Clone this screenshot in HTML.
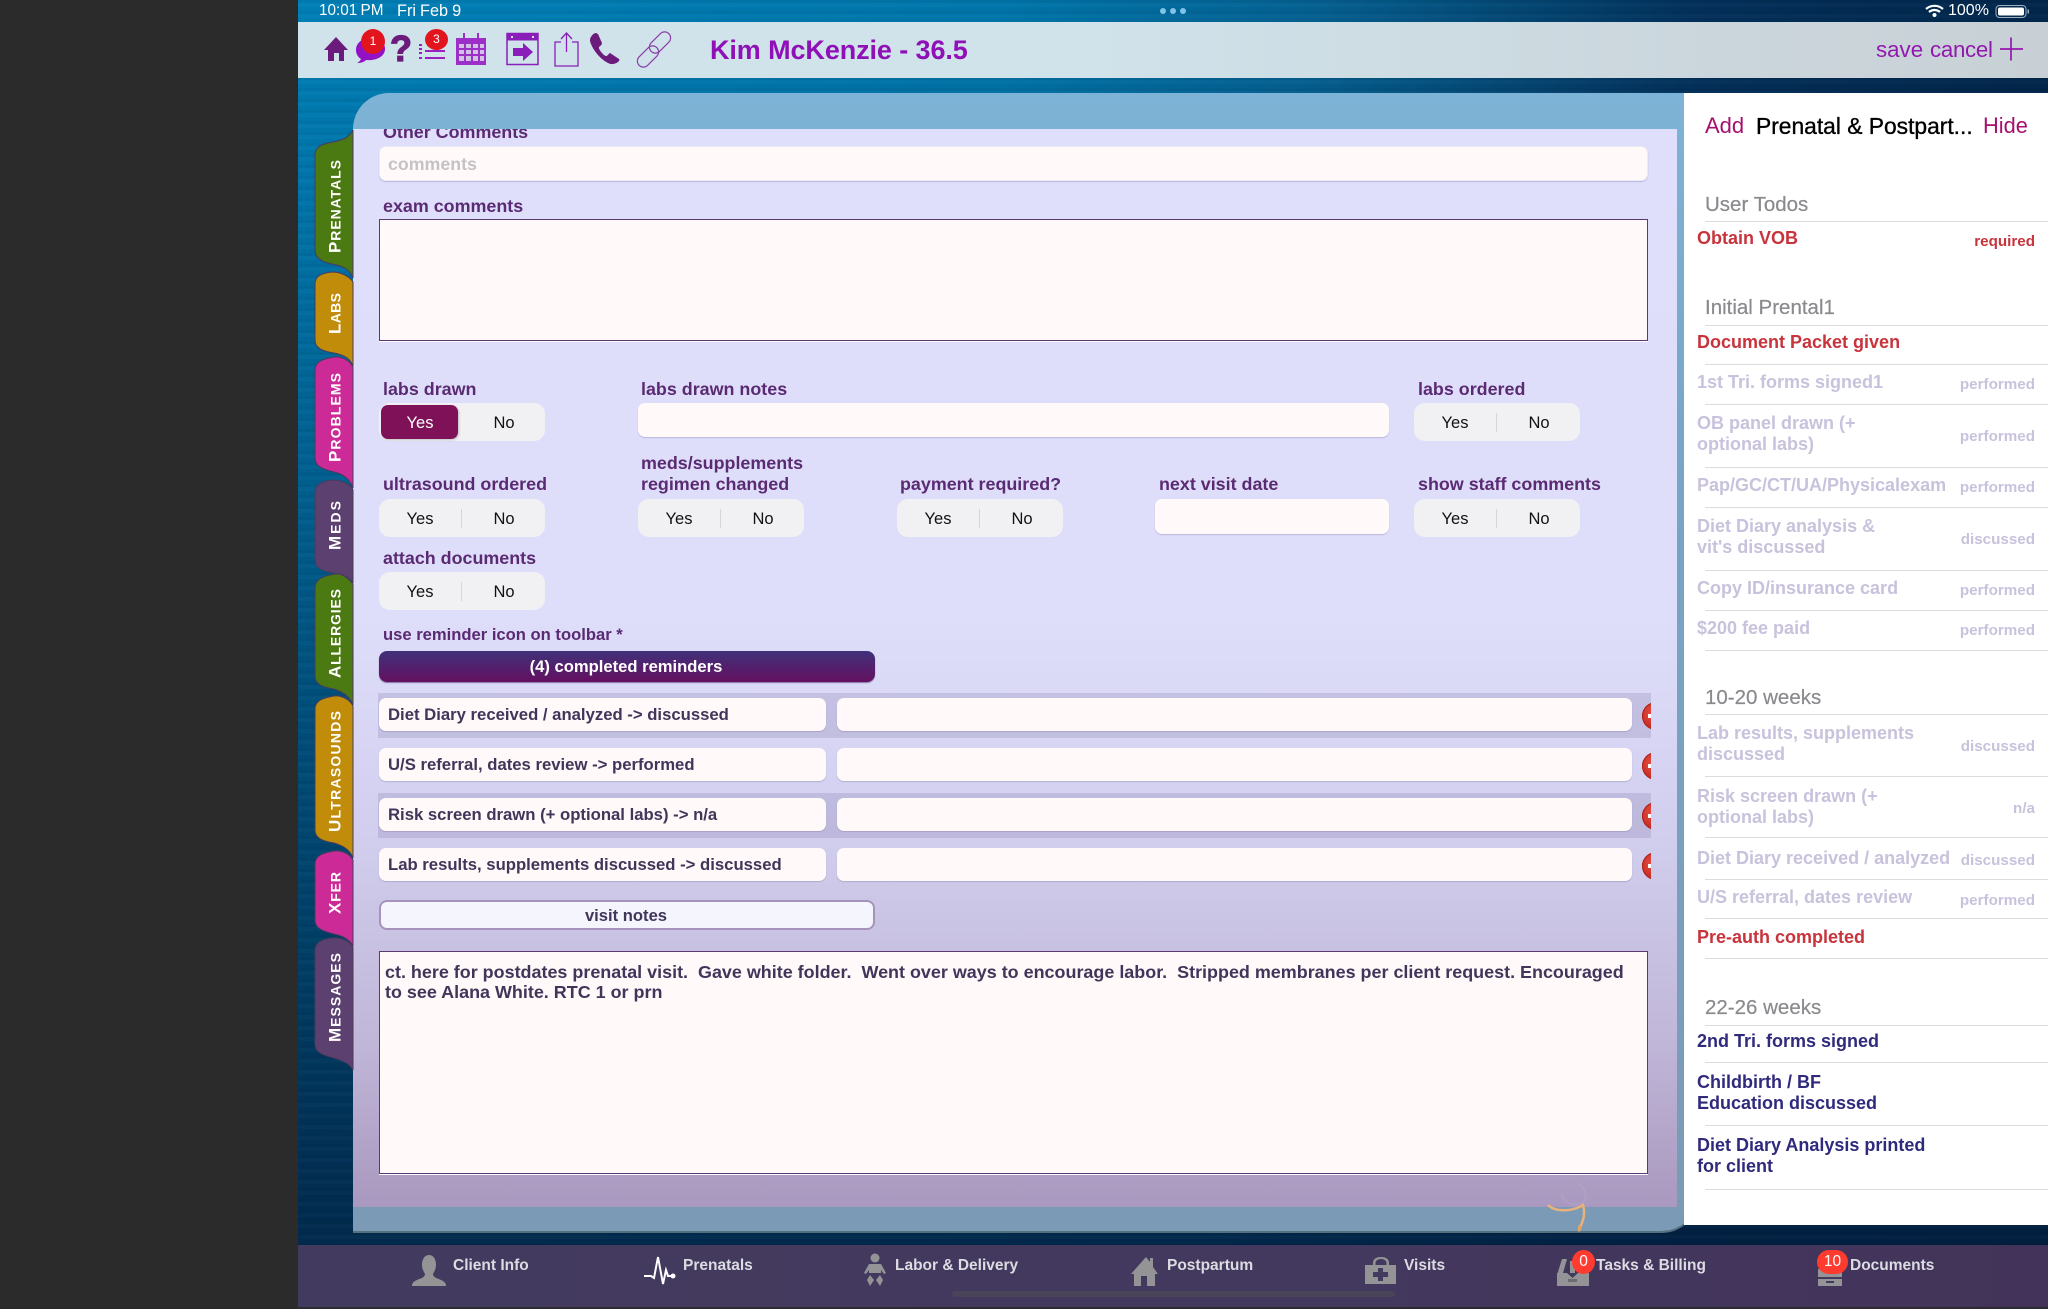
<!DOCTYPE html>
<html><head><meta charset="utf-8">
<style>
html,body{margin:0;padding:0;background:#2b2b2b}
#p{position:relative;width:2048px;height:1309px;overflow:hidden;background:#2b2b2b;font-family:"Liberation Sans",sans-serif}
#p div{position:absolute;white-space:pre;box-sizing:border-box}
#app{left:298px;top:0;width:1750px;height:1309px;background:linear-gradient(180deg,rgba(1,30,62,0) 0%,rgba(1,30,62,.12) 15%,rgba(1,30,62,.5) 55%,rgba(1,30,62,.85) 92%,rgba(1,30,62,.9) 100%),linear-gradient(90deg,#0080b8 0%,#0076ab 40%,#046192 58%,#03305a 80%,#02264b 100%);overflow:hidden}
#streak{left:0;top:0;width:1750px;height:1309px;background:repeating-linear-gradient(180deg,rgba(0,0,0,.05) 0 3px,rgba(255,255,255,.015) 3px 7px,rgba(0,0,0,.02) 7px 11px)}
.l{font-weight:bold;font-size:17.9px;line-height:20px;height:20px;color:#5a2a72}
.seg{background:#f1f1f3;border-radius:11px;height:38px;width:166px}
.seg i{position:absolute;left:82px;top:10px;width:1px;height:19px;background:#d6d6da}
.seg span{position:absolute;top:1px;line-height:38px;font-size:16.5px;color:#111;width:60px;text-align:center}
.seg .y{left:11px}.seg .n{left:95px}
.inp{background:#fff9f9;border-radius:7px;box-shadow:0 1px 1px rgba(120,110,160,.35)}
.ta{background:#fff9f9;border:1px solid #5a3a70;box-shadow:0 1px 0 #fff}
.band{left:378px;width:1273px;height:45px;background:rgba(120,110,160,.22)}
.it{font-weight:bold;font-size:16.7px;line-height:33px;height:33px;color:#41355a;padding-left:9px;left:379px;width:447px}
.minus{width:28px;height:28px;border-radius:50%;background:radial-gradient(circle at 40% 40%,#e85045,#c0241c 75%);box-shadow:inset 0 0 0 1px #a82018}
.minus b{position:absolute;left:6px;top:12px;width:16px;height:4px;background:#fff}
.sl{height:1px;left:1705px;width:343px;background:#dcdcdf}
.sh{left:1705px;font-size:20.5px;line-height:24px;height:24px;color:#8a8a8e;-webkit-text-stroke:.2px #8a8a8e}
.s{left:1697px;font-weight:bold;font-size:18px;line-height:20.5px;color:#c8c2dc}
.r{color:#c8333c}.nv{color:#302a7c}
.st{right:13px;font-weight:bold;font-size:15.2px;line-height:20px;height:20px;color:#c8c2dc;text-align:right}
.st.r{color:#c8333c}
.b{top:1256px;font-weight:bold;font-size:15.5px;line-height:20px;color:#dcdce2}
</style></head><body>
<div id="p">
<div id="app"><div id="streak"></div></div>

<!-- toolbar -->
<div style="left:298px;top:22px;width:1750px;height:56px;background:linear-gradient(90deg,#d0e3eb 0%,#d0e2ea 45%,#c8d0d5 100%)"></div>
<div style="left:319px;top:1px;color:#fff;font-size:15.3px;line-height:20px;word-spacing:-1px">10:01 PM</div>
<div style="left:397px;top:1px;color:#fff;font-size:16.3px;line-height:20px;word-spacing:-.5px">Fri Feb 9</div>
<div style="left:1160px;top:8px;width:6px;height:6px;border-radius:50%;background:#7fc4e8;box-shadow:10px 0 0 #7fc4e8,20px 0 0 #7fc4e8"></div>
<div style="left:1948px;top:1px;color:#fff;font-size:16px;line-height:20px">100%</div>

<svg style="position:absolute;left:0;top:0" width="2048" height="93" viewBox="0 0 2048 93">
 <g fill="none" stroke="#fff" stroke-width="2.2"><path d="M1926 9a13 13 0 0 1 17 0"/><path d="M1929 12a8.5 8.5 0 0 1 11 0"/></g><circle cx="1934.5" cy="15" r="2" fill="#fff"/>
 <rect x="1996" y="5.5" width="30" height="12" rx="3.5" fill="none" stroke="#9fb0c0" stroke-width="1"/><rect x="1998" y="7.5" width="26" height="8" rx="2" fill="#fff"/><rect x="2027.5" y="9.5" width="1.5" height="4" fill="#9fb0c0"/>
 <path d="M336 37 L324 50 H328 V61 H334 V53 H339 V61 H344 V50 H348 Z" fill="#6b1b7b"/>
 <path d="M371 38c-9 0-15 5-15 12 0 4 2 7 5 9-1 2-2 3-4 4 4 0 7-1 9-3 9 1 19-3 19-11 0-7-6-11-14-11z" fill="#9212c4"/>
 <text x="390" y="61" font-family="Liberation Sans" font-weight="bold" font-size="36" fill="#6b1b7b" stroke="#6b1b7b" stroke-width="1.2">?</text>
 <g fill="#9a20c4"><rect x="419" y="44" width="3" height="2"/><rect x="419" y="48" width="3" height="2"/><rect x="419" y="52" width="3" height="2"/><rect x="419" y="57" width="3" height="2"/><rect x="425" y="50" width="20" height="2"/><rect x="425" y="57" width="20" height="2"/></g>
 <rect x="456" y="38" width="30" height="27" fill="#9b2fc8"/>
 <rect x="463" y="33" width="2" height="7" fill="#9b2fc8"/><rect x="477" y="33" width="2" height="7" fill="#9b2fc8"/>
 <g fill="#d0c2e2"><rect x="459" y="44" width="5" height="4"/><rect x="466" y="44" width="5" height="4"/><rect x="473" y="44" width="5" height="4"/><rect x="480" y="44" width="4" height="4"/><rect x="459" y="50" width="5" height="4"/><rect x="466" y="50" width="5" height="4"/><rect x="473" y="50" width="5" height="4"/><rect x="480" y="50" width="4" height="4"/><rect x="459" y="56" width="5" height="5"/><rect x="466" y="56" width="5" height="5"/><rect x="473" y="56" width="5" height="5"/><rect x="480" y="56" width="4" height="5"/></g>
 <rect x="507" y="33.5" width="31" height="31" fill="none" stroke="#8a1eb8" stroke-width="1.5"/><rect x="507" y="33.5" width="31" height="7" fill="#8a1eb8"/><rect x="511" y="36" width="2" height="2" fill="#d0e2ea"/><rect x="532" y="36" width="2" height="2" fill="#d0e2ea"/>
 <path d="M513 48h10v-5l10 9-10 9v-5h-10z" fill="#8a1eb8"/>
 <path d="M561 42h-6v24h23V42h-6M566.5 52V33.5M561 39l5.5-6 5.5 6" fill="none" stroke="#8a1eb8" stroke-width="1.3"/>
 <path d="M591 37c1-2 3-4 5-4l2 1 4 9c0 2-2 3-3 4-1 2 5 9 7 9 2 0 3-3 4-3l9 6c1 1 0 2-1 3-3 2-6 3-10 1-8-4-16-14-18-22 0-1 0-3 1-4z" fill="#6b1b7b"/>
 <g fill="none" stroke="#8a3ea8" stroke-width="1.2"><rect x="654" y="30" width="12" height="25" rx="6" transform="rotate(45 660 42.500)"/><rect x="642" y="44" width="12" height="25" rx="6" transform="rotate(45 648 56.500)"/></g>
 <path d="M2011 37.5v23M2000 49h23" stroke="#9318b0" stroke-width="1.7" fill="none"/>
</svg>
<div style="left:361px;top:29px;width:24px;height:25px;border-radius:50%;background:#e2141e;color:#fff;font-size:12px;line-height:25px;text-align:center">1</div>
<div style="left:425px;top:29px;width:23px;height:21px;border-radius:50%;background:#e2141e;color:#fff;font-size:12px;line-height:21px;text-align:center">3</div>
<div style="left:710px;top:33px;font-weight:bold;font-size:27px;line-height:34px;color:#9010b8;letter-spacing:-.1px">Kim McKenzie - 36.5</div>
<div style="left:1876px;top:36px;font-size:22.3px;line-height:28px;color:#9318b0">save</div>
<div style="left:1930px;top:36px;font-size:22.3px;line-height:28px;color:#9318b0;letter-spacing:-.3px">cancel</div>

<!-- frame and form -->
<div style="left:353px;top:93px;width:1345px;height:1138px;background:linear-gradient(180deg,#7db3d6 0%,#78a6c6 30%,#7a9ab5 100%);border-radius:36px 0 36px 0;box-shadow:0 2px 0 #55707f"></div>
<div style="left:353px;top:129px;width:1324px;height:1078px;background:linear-gradient(180deg,#dfdffb 0%,#dedefa 45%,#d2cfee 65%,#c0b6d8 85%,#a998bf 100%);overflow:hidden">
 <div class="l" style="left:30px;top:-7px">Other Comments</div>
</div>
<svg style="position:absolute;left:1530px;top:1174px" width="90" height="70" viewBox="0 0 90 70" fill="none"><path d="M18 31 C26 39 44 37 53 31 C56 42 52 48 50 54" stroke="#e8b27a" stroke-width="2.5"/><path d="M50 50c2 3 2 6-1 8-2-2-2-5 1-8z" fill="#e0a468"/><path d="M32 20c0 9 12 12 20 9 6-4 4-16-4-20" stroke="#b8a7c8" stroke-width="1.5" opacity=".6"/></svg>

<!-- tabs -->
<svg style="position:absolute;left:0;top:0;overflow:visible" width="360" height="1100" viewBox="0 0 360 1100">
 <g stroke="#4a3a5e" stroke-width="1">
 <path d="M353 130 C348 140 338 141 328 143 C320 145 315 148 315 155 V250 C315 258 322 262 332 264 C344 266 350 270 353 278 Z" fill="#4b7a12"/>
 <path d="M353 282 C350 277 342 272 332 272 C322 273 315 276 315 284 V340 C315 348 322 351 334 353 C344 355 350 358 353 366 Z" fill="#c08c0a"/>
 <path d="M353 367 C350 361 342 356 334 357 C322 359 315 362 315 370 V458 C315 466 322 469 334 472 C344 474 350 480 353 488 Z" fill="#cc2a96"/>
 <path d="M353 490 C350 484 342 480 332 480 C322 481 315 485 315 492 V560 C315 568 322 571 334 573 C344 575 350 577 353 583 Z" fill="#5c4070"/>
 <path d="M353 584 C348 578 342 573 335 574 C322 576 315 580 315 588 V676 C315 684 322 687 334 689 C344 692 350 697 353 705 Z" fill="#4b7a12"/>
 <path d="M353 706 C350 700 342 695 334 696 C322 698 315 701 315 709 V830 C315 838 322 841 334 843 C344 846 350 850 353 858 Z" fill="#c08c0a"/>
 <path d="M353 860 C350 854 342 850 334 851 C322 853 315 856 315 864 V920 C315 928 322 931 334 934 C344 936 350 940 353 946 Z" fill="#cc2a96"/>
 <path d="M353 947 C350 942 342 937 332 938 C322 939 315 943 315 950 V1044 C315 1052 322 1055 334 1058 C344 1061 350 1064 353 1070 Z" fill="#5c4070"/>
 </g>
 <g fill="#fff" font-family="Liberation Sans" font-weight="bold" font-size="14">
 <text transform="translate(340.5 253) rotate(-90)" textLength="93" lengthAdjust="spacing"><tspan font-size="17">P</tspan>RENATALS</text>
 <text transform="translate(340.5 334) rotate(-90)" textLength="41" lengthAdjust="spacing"><tspan font-size="17">L</tspan>ABS</text>
 <text transform="translate(340.5 462) rotate(-90)" textLength="89" lengthAdjust="spacing"><tspan font-size="17">P</tspan>ROBLEMS</text>
 <text transform="translate(340.5 550) rotate(-90)" textLength="49" lengthAdjust="spacing"><tspan font-size="17">M</tspan>EDS</text>
 <text transform="translate(340.5 678) rotate(-90)" textLength="89" lengthAdjust="spacing"><tspan font-size="17">A</tspan>LLERGIES</text>
 <text transform="translate(340.5 832) rotate(-90)" textLength="121" lengthAdjust="spacing"><tspan font-size="17">U</tspan>LTRASOUNDS</text>
 <text transform="translate(340.5 914) rotate(-90)" textLength="42" lengthAdjust="spacing"><tspan font-size="17">X</tspan>FER</text>
 <text transform="translate(340.5 1042) rotate(-90)" textLength="89" lengthAdjust="spacing"><tspan font-size="17">M</tspan>ESSAGES</text>
 </g>
</svg>

<!-- form contents -->
<div class="inp" style="left:379px;top:146px;width:1269px;height:35px;border:1px solid #ecebf3"></div>
<div style="left:388px;top:154px;font-weight:bold;font-size:17.8px;line-height:20px;color:#c4c2c6">comments</div>
<div class="l" style="left:383px;top:196px">exam comments</div>
<div class="ta" style="left:379px;top:219px;width:1269px;height:122px"></div>

<div class="l" style="left:383px;top:379px">labs drawn</div>
<div class="seg" style="left:379px;top:403px"><div style="left:2px;top:2px;width:77px;height:34px;border-radius:7px;background:#7f1158;box-shadow:1px 1px 2px rgba(0,0,0,.2)"></div><span class="y" style="color:#fff">Yes</span><span class="n">No</span></div>
<div class="l" style="left:641px;top:379px">labs drawn notes</div>
<div class="inp" style="left:638px;top:403px;width:751px;height:34px"></div>
<div class="l" style="left:1418px;top:379px">labs ordered</div>
<div class="seg" style="left:1414px;top:403px"><i></i><span class="y">Yes</span><span class="n">No</span></div>

<div class="l" style="left:383px;top:474px">ultrasound ordered</div>
<div class="seg" style="left:379px;top:499px"><i></i><span class="y">Yes</span><span class="n">No</span></div>
<div class="l" style="left:641px;top:453px">meds/supplements</div>
<div class="l" style="left:641px;top:474px">regimen changed</div>
<div class="seg" style="left:638px;top:499px"><i></i><span class="y">Yes</span><span class="n">No</span></div>
<div class="l" style="left:900px;top:474px">payment required?</div>
<div class="seg" style="left:897px;top:499px"><i></i><span class="y">Yes</span><span class="n">No</span></div>
<div class="l" style="left:1159px;top:474px">next visit date</div>
<div class="inp" style="left:1155px;top:499px;width:234px;height:35px"></div>
<div class="l" style="left:1418px;top:474px">show staff comments</div>
<div class="seg" style="left:1414px;top:499px"><i></i><span class="y">Yes</span><span class="n">No</span></div>

<div class="l" style="left:383px;top:548px">attach documents</div>
<div class="seg" style="left:379px;top:572px"><i></i><span class="y">Yes</span><span class="n">No</span></div>

<div class="l" style="left:383px;top:625px;font-size:16.6px">use reminder icon on toolbar *</div>
<div style="left:379px;top:651px;width:496px;height:31px;border-radius:8px;background:linear-gradient(180deg,#40317a,#641060);color:#fff;font-weight:bold;font-size:16.6px;line-height:32px;text-align:center;padding-right:2px;box-shadow:0 1px 1px rgba(70,50,110,.6)">(4) completed reminders</div>

<div class="band" style="top:693px"></div>
<div class="band" style="top:793px"></div>
<div class="inp it" style="top:698px">Diet Diary received / analyzed -&gt; discussed</div>
<div class="inp it" style="top:748px">U/S referral, dates review -&gt; performed</div>
<div class="inp it" style="top:798px">Risk screen drawn (+ optional labs) -&gt; n/a</div>
<div class="inp it" style="top:848px">Lab results, supplements discussed -&gt; discussed</div>
<div class="inp" style="left:837px;top:698px;width:795px;height:33px"></div>
<div class="inp" style="left:837px;top:748px;width:795px;height:33px"></div>
<div class="inp" style="left:837px;top:798px;width:795px;height:33px"></div>
<div class="inp" style="left:837px;top:848px;width:795px;height:33px"></div>
<div style="left:1642px;top:690px;width:9px;height:200px;overflow:hidden">
 <div class="minus" style="left:0;top:12px"><b></b></div>
 <div class="minus" style="left:0;top:62px"><b></b></div>
 <div class="minus" style="left:0;top:112px"><b></b></div>
 <div class="minus" style="left:0;top:162px"><b></b></div>
</div>
<div style="left:379px;top:900px;width:496px;height:30px;border-radius:8px;background:#f5f5fd;border:2px solid #a693bb;color:#41355a;font-weight:bold;font-size:16.6px;line-height:28px;text-align:center;padding-right:2px">visit notes</div>
<div class="ta" style="left:379px;top:951px;width:1269px;height:223px"></div>
<div style="left:385px;top:962px;font-weight:bold;font-size:17.95px;line-height:20px;color:#41355a">ct. here for postdates prenatal visit.  Gave white folder.  Went over ways to encourage labor.  Stripped membranes per client request. Encouraged
to see Alana White. RTC 1 or prn</div>

<!-- sidebar -->
<div style="left:1684px;top:93px;width:364px;height:1132px;background:#fff"></div>
<div style="left:1705px;top:113px;font-size:22px;line-height:26px;color:#a5106e">Add</div>
<div style="left:1756px;top:113px;font-size:22.8px;line-height:26px;color:#000;-webkit-text-stroke:.35px #000">Prenatal &amp; Postpart...</div>
<div style="left:1983px;top:113px;font-size:21.8px;line-height:26px;color:#a5106e">Hide</div>

<div class="sh" style="top:193px">User Todos</div><div class="sl" style="top:221px"></div>
<div class="s r" style="top:228px">Obtain VOB</div><div class="st r" style="top:232px">required</div>

<div class="sh" style="top:296px">Initial Prental1</div><div class="sl" style="top:325px"></div>
<div class="s r" style="top:332px">Document Packet given</div><div class="sl" style="top:364px"></div>
<div class="s" style="top:372px">1st Tri. forms signed1</div><div class="st" style="top:375px">performed</div><div class="sl" style="top:404px"></div>
<div class="s" style="top:413px">OB panel drawn (+
optional labs)</div><div class="st" style="top:427px">performed</div><div class="sl" style="top:467px"></div>
<div class="s" style="top:475px">Pap/GC/CT/UA/Physicalexam</div><div class="st" style="top:478px">performed</div><div class="sl" style="top:507px"></div>
<div class="s" style="top:516px">Diet Diary analysis &amp;
vit's discussed</div><div class="st" style="top:530px">discussed</div><div class="sl" style="top:570px"></div>
<div class="s" style="top:578px">Copy ID/insurance card</div><div class="st" style="top:581px">performed</div><div class="sl" style="top:610px"></div>
<div class="s" style="top:618px">$200 fee paid</div><div class="st" style="top:621px">performed</div><div class="sl" style="top:650px"></div>

<div class="sh" style="top:686px">10-20 weeks</div><div class="sl" style="top:714px"></div>
<div class="s" style="top:723px">Lab results, supplements
discussed</div><div class="st" style="top:737px">discussed</div><div class="sl" style="top:776px"></div>
<div class="s" style="top:786px">Risk screen drawn (+
optional labs)</div><div class="st" style="top:799px">n/a</div><div class="sl" style="top:837px"></div>
<div class="s" style="top:848px">Diet Diary received / analyzed</div><div class="st" style="top:851px">discussed</div><div class="sl" style="top:879px"></div>
<div class="s" style="top:887px">U/S referral, dates review</div><div class="st" style="top:891px">performed</div><div class="sl" style="top:918px"></div>
<div class="s r" style="top:927px">Pre-auth completed</div><div class="sl" style="top:958px"></div>

<div class="sh" style="top:996px">22-26 weeks</div><div class="sl" style="top:1025px"></div>
<div class="s nv" style="top:1031px">2nd Tri. forms signed</div><div class="sl" style="top:1062px"></div>
<div class="s nv" style="top:1072px">Childbirth / BF
Education discussed</div><div class="sl" style="top:1125px"></div>
<div class="s nv" style="top:1135px">Diet Diary Analysis printed
for client</div><div class="sl" style="top:1189px"></div>

<!-- bottom bar -->
<div style="left:298px;top:1245px;width:1750px;height:64px;background:linear-gradient(90deg,#433a5f,#43395e 50%,#43335a);border-bottom:2px solid #2c2c30"></div>
<div style="left:952px;top:1291px;width:443px;height:6px;border-radius:3px;background:#4a4458"></div>
<div class="b" style="left:453px">Client Info</div>
<div class="b" style="left:683px">Prenatals</div>
<div class="b" style="left:895px">Labor &amp; Delivery</div>
<div class="b" style="left:1167px">Postpartum</div>
<div class="b" style="left:1404px">Visits</div>
<div class="b" style="left:1596px">Tasks &amp; Billing</div>
<div class="b" style="left:1850px">Documents</div>
<svg style="position:absolute;left:0;top:1245px" width="2048" height="64" viewBox="0 0 2048 64">
 <path d="M429 10c-5 0-7 5-7 10 0 4 2 7 3 9 0 2-2 4-6 5-4 2-7 3-7 7h34c0-4-3-5-7-7-4-1-6-3-6-5 1-2 3-5 3-9 0-5-2-10-7-10z" fill="#949496"/>
 <path d="M644 31h7l3 2 4-21 5 27 3-14 2 6h6" fill="none" stroke="#fff" stroke-width="2"/><circle cx="673" cy="31" r="2.5" fill="#fff"/>
 <g fill="#949496"><circle cx="875" cy="13" r="4.5"/><path d="M869 19h12l5 9-2 1-3-4v3h-12v-3l-3 4-2-1z"/><path d="M870 30l4 5-4 6-3-6zM880 30l-4 5 4 6 3-6z"/></g>
 <path d="M1146 12 L1131 29 H1134 V41 H1141 V31 H1147 V41 H1155 V29 H1158 L1153 22 V13 H1150 V17Z" fill="#949496"/>
 <path d="M1373 20v-2c0-4 3-6 8-6s8 2 8 6v2h-2.5v-2c0-2-2-4-5.5-4s-5.5 2-5.5 4v2z" fill="#949496"/><rect x="1365" y="20" width="31" height="19" fill="#949496"/><path d="M1378 23h5v4h5v5h-5v4h-5v-4h-5v-5h5z" fill="#433a5f"/>
 <path d="M1557 30l5-16h5l-4 14h7v-12h5v12h7l6 2z" fill="#949496"/><rect x="1557" y="28" width="32" height="13" fill="#949496"/><path d="M1567 28h11l-5.5 5z" fill="#433a5f"/><rect x="1568" y="34" width="9" height="3" fill="#6c6c70"/>
 <rect x="1818" y="24" width="24" height="17" fill="#949496"/><rect x="1818" y="32" width="24" height="2" fill="#433a5f"/><rect x="1826" y="25" width="8" height="2" fill="#433a5f"/><rect x="1826" y="36" width="8" height="2" fill="#433a5f"/>
</svg>
<div style="left:1572px;top:1250px;width:23px;height:24px;border-radius:50%;background:#ff3b30;color:#fff;font-size:15.5px;line-height:23px;text-align:center">0</div>
<div style="left:1817px;top:1250px;width:31px;height:24px;border-radius:12px;background:#ff3b30;color:#fff;font-size:15.5px;line-height:23px;text-align:center">10</div>
</div>
</body></html>
